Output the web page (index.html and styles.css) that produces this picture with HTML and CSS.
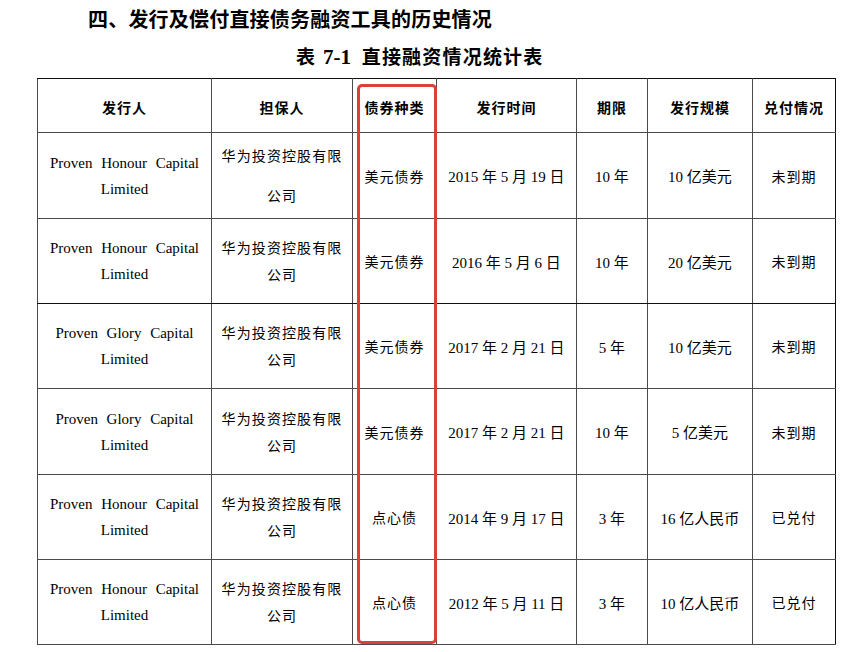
FILE: index.html
```html
<!DOCTYPE html>
<html lang="zh">
<head>
<meta charset="utf-8">
<link rel="stylesheet" href="styles.css">
</head>
<body>
<div class="page">
  <h1 class="section-title">四、发行及偿付直接债务融资工具的历史情况</h1>
  <h2 class="caption"><span class="cap-cn">表</span> <span class="cap-num">7-1</span> <span class="cap-cn">直接融资情况统计表</span></h2>
  <div class="table-wrap">
    <table class="stats">
      <colgroup>
        <col class="c1"><col class="c2"><col class="c3"><col class="c4"><col class="c5"><col class="c6"><col class="c7">
      </colgroup>
      <thead>
        <tr class="head">
          <th>发行人</th><th>担保人</th><th>债券种类</th><th>发行时间</th><th>期限</th><th>发行规模</th><th>兑付情况</th>
        </tr>
      </thead>
      <tbody>
        <tr class="r86">
          <td class="issuer"><span class="l1 honour">Proven Honour Capital</span><span class="l2">Limited</span></td>
          <td class="guar wide"><span class="g1">华为投资控股有限</span><span class="g2">公司</span></td>
          <td class="cn">美元债券</td>
          <td class="date">2015 年 5 月 19 日</td>
          <td class="mix">10 年</td>
          <td class="mix">10 亿美元</td>
          <td class="cn">未到期</td>
        </tr>
        <tr class="r85 dark">
          <td class="issuer"><span class="l1 honour">Proven Honour Capital</span><span class="l2">Limited</span></td>
          <td class="guar"><span class="g1">华为投资控股有限</span><span class="g2">公司</span></td>
          <td class="cn">美元债券</td>
          <td class="date">2016 年 5 月 6 日</td>
          <td class="mix">10 年</td>
          <td class="mix">20 亿美元</td>
          <td class="cn">未到期</td>
        </tr>
        <tr class="r85">
          <td class="issuer"><span class="l1 glory">Proven Glory Capital</span><span class="l2">Limited</span></td>
          <td class="guar"><span class="g1">华为投资控股有限</span><span class="g2">公司</span></td>
          <td class="cn">美元债券</td>
          <td class="date">2017 年 2 月 21 日</td>
          <td class="mix">5 年</td>
          <td class="mix">10 亿美元</td>
          <td class="cn">未到期</td>
        </tr>
        <tr class="r86">
          <td class="issuer"><span class="l1 glory">Proven Glory Capital</span><span class="l2">Limited</span></td>
          <td class="guar"><span class="g1">华为投资控股有限</span><span class="g2">公司</span></td>
          <td class="cn">美元债券</td>
          <td class="date">2017 年 2 月 21 日</td>
          <td class="mix">10 年</td>
          <td class="mix">5 亿美元</td>
          <td class="cn">未到期</td>
        </tr>
        <tr class="r85">
          <td class="issuer"><span class="l1 honour">Proven Honour Capital</span><span class="l2">Limited</span></td>
          <td class="guar"><span class="g1">华为投资控股有限</span><span class="g2">公司</span></td>
          <td class="cn">点心债</td>
          <td class="date">2014 年 9 月 17 日</td>
          <td class="mix">3 年</td>
          <td class="mix">16 亿人民币</td>
          <td class="cn">已兑付</td>
        </tr>
        <tr class="r85">
          <td class="issuer"><span class="l1 honour">Proven Honour Capital</span><span class="l2">Limited</span></td>
          <td class="guar"><span class="g1">华为投资控股有限</span><span class="g2">公司</span></td>
          <td class="cn">点心债</td>
          <td class="date">2012 年 5 月 11 日</td>
          <td class="mix">3 年</td>
          <td class="mix">10 亿人民币</td>
          <td class="cn">已兑付</td>
        </tr>
      </tbody>
    </table>
    <div class="highlight"></div>
  </div>
</div>
</body>
</html>
```

FILE: styles.css
```css
html, body {
  margin: 0;
  padding: 0;
  background: #ffffff;
}

.page {
  width: 843px;
  height: 652px;
  overflow: hidden;
  color: #000;
  font-family: "Liberation Serif", "Noto Sans CJK SC", serif;
}

.section-title {
  margin: 0;
  padding: 7px 0 0 88px;
  height: 35px;
  box-sizing: border-box;
  font-family: "Noto Sans CJK SC", sans-serif;
  font-size: 20px;
  line-height: 24px;
  font-weight: 700;
  letter-spacing: 0.2px;
}

.caption {
  margin: 0;
  height: 43px;
  padding: 9px 0 0 296px;
  box-sizing: border-box;
  font-size: 19px;
  line-height: 24px;
  font-weight: 700;
  white-space: pre;
}

.cap-cn {
  font-family: "Noto Sans CJK SC", sans-serif;
  letter-spacing: 1.2px;
}

.cap-num {
  font-family: "Liberation Serif", serif;
  font-size: 21px;
  font-weight: 700;
  margin: 0 6px 0 2px;
}

.table-wrap {
  position: relative;
  margin-left: 37px;
  width: 798px;
}

.stats {
  border-collapse: collapse;
  table-layout: fixed;
  width: 798px;
}

.stats .c1 { width: 174px; }
.stats .c2 { width: 141px; }
.stats .c3 { width: 84px; }
.stats .c4 { width: 140px; }
.stats .c5 { width: 71px; }
.stats .c6 { width: 105px; }
.stats .c7 { width: 83px; }

.stats th,
.stats td {
  border: 1px solid #4a4a4a;
  padding: 0;
  text-align: center;
  vertical-align: middle;
}

.stats thead th {
  border-top-color: #111;
}

.stats th:last-child,
.stats td:last-child {
  border-right-color: #111;
}

.stats tr.dark td {
  border-bottom-color: #111;
}

.head {
  height: 54px;
}

.head th {
  font-family: "Noto Sans CJK SC", sans-serif;
  font-size: 14px;
  font-weight: 700;
  letter-spacing: 1px;
  padding-top: 2px;
}

.r86 { height: 86px; }
.r85 { height: 85px; }

.issuer {
  font-family: "Liberation Serif", serif;
  font-size: 15px;
  line-height: 26px;
  padding-top: 2px;
}

.issuer .l1,
.issuer .l2 {
  display: block;
  margin: 0 auto;
}

.issuer .honour {
  width: 149px;
  text-align: justify;
  text-align-last: justify;
}

.issuer .glory {
  width: 138px;
  text-align: justify;
  text-align-last: justify;
}

.guar {
  font-family: "Noto Sans CJK SC", sans-serif;
  font-size: 14px;
  line-height: 27px;
  letter-spacing: 1.1px;
}

.guar .g1,
.guar .g2 {
  display: block;
}

.guar.wide .g2 {
  margin-top: 13px;
}

.cn {
  font-family: "Noto Sans CJK SC", sans-serif;
  font-size: 14px;
  letter-spacing: 1px;
  padding-top: 5px;
}

.date,
.mix {
  font-family: "Liberation Serif", "Noto Sans CJK SC", serif;
  font-size: 15px;
  padding-top: 5px;
}

.highlight {
  position: absolute;
  left: 320px;
  top: 6px;
  width: 80px;
  height: 560px;
  box-sizing: border-box;
  border: 3px solid #d8413b;
  border-radius: 5px;
  pointer-events: none;
}
```
